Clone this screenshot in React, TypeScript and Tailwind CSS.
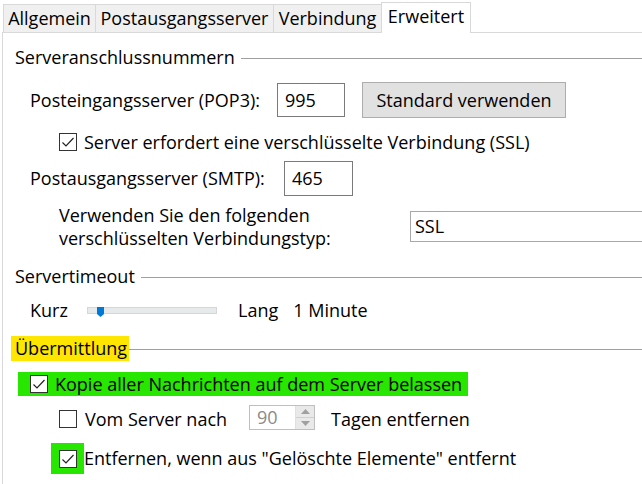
import React from 'react';

const font = { fontFamily: '"Open Sans", "Noto Sans", sans-serif' };

function Check({ checked }: { checked: boolean }) {
  return (
    <span className="flex h-[18px] w-[18px] shrink-0 items-center justify-center border border-[#333333] bg-white">
      {checked && (
        <svg width="14" height="14" viewBox="0 0 14 14">
          <polyline points="1.5,7.5 5,11 12.5,3" fill="none" stroke="#222222" strokeWidth="1.2" />
        </svg>
      )}
    </span>
  );
}

function GroupHeader({ title, highlight }: { title: string; highlight?: boolean }) {
  return (
    <div className="flex h-[25px] items-center">
      <span className={highlight ? 'flex h-[25px] items-center bg-[#ffe600] pl-[4px] pr-[2px]' : 'pl-[12px] pr-[6px]'}>
        {title}
      </span>
      <div className="mt-[2px] h-px flex-1 bg-[#a0a0a0]" />
    </div>
  );
}

const tabs = [
  { label: 'Allgemein', w: 'w-[92px]' },
  { label: 'Postausgangsserver', w: 'w-[178px]' },
  { label: 'Verbindung', w: 'w-[108px]' },
];

export default function App() {
  return (
    <div className="h-[484px] w-[642px] overflow-hidden bg-white text-[18px] text-black" style={font}>
      {/* tab strip */}
      <div className="flex h-[32px] items-end pl-[3px]">
        {tabs.map(t => (
          <div
            key={t.label}
            className={`${t.w} flex h-[28px] items-center justify-center whitespace-nowrap border-l border-t border-[#d9d9d9] bg-[#f0f0f0]`}
          >
            {t.label}
          </div>
        ))}
        <div className="relative z-10 -mb-px flex h-[31px] w-[90px] items-center justify-center border-x border-t border-[#d9d9d9] bg-white pb-[4px]">
          Erweitert
        </div>
      </div>

      {/* panel */}
      <div className="ml-[2px] flex h-[452px] flex-col border-l border-t border-[#d9d9d9]">
        <div className="mt-[12px]">
          <GroupHeader title="Serveranschlussnummern" />
        </div>

        <div className="mt-[12px] flex h-[36px] items-center">
          <span className="w-[274px] shrink-0 pl-[27px]">Posteingangsserver (POP3):</span>
          <div className="flex h-[34px] w-[68px] items-center border border-[#7a7a7a] pl-[7px]">995</div>
          <button className="ml-[17px] flex h-[36px] w-[204px] items-center justify-center border border-[#adadad] bg-[#e1e1e1]">
            Standard verwenden
          </button>
        </div>

        <div className="mt-[12px] flex h-[24px] items-center pl-[56px]">
          <Check checked />
          <span className="ml-[7px]">Server erfordert eine verschlüsselte Verbindung (SSL)</span>
        </div>

        <div className="mt-[7px] flex h-[35px] items-center">
          <span className="w-[281px] shrink-0 pl-[27px]">Postausgangsserver (SMTP):</span>
          <div className="flex h-[35px] w-[69px] items-center border border-[#7a7a7a] pl-[7px]">465</div>
        </div>

        <div className="mt-[7px] flex h-[47px] items-center">
          <div className="w-[407px] shrink-0 pl-[56px] leading-[23px]">
            Verwenden Sie den folgenden
            <br />
            verschlüsselten Verbindungstyp:
          </div>
          <div className="-mr-[4px] flex h-[31px] flex-1 items-center border border-[#a8a8a8] pl-[4px]">SSL</div>
        </div>

        <div className="mt-[14px]">
          <GroupHeader title="Servertimeout" />
        </div>

        <div className="mt-[9px] flex h-[24px] items-center">
          <span className="w-[84px] shrink-0 pl-[27px]">Kurz</span>
          <div className="relative h-[7px] w-[130px] border border-[#d6d6d6] bg-[#e7eaea]">
            <svg className="absolute left-[9px] top-[-1px]" width="7" height="10" viewBox="0 0 7 10">
              <polygon points="0,0 7,0 7,7 3.5,10 0,7" fill="#0078d7" />
            </svg>
          </div>
          <span className="ml-[21px]">Lang</span>
          <span className="ml-[15px]">1 Minute</span>
        </div>

        <div className="mt-[14px] pl-[8px]">
          <GroupHeader title="Übermittlung" highlight />
        </div>

        <div className="mt-[11px] flex">
          <div className="ml-[15px] flex h-[24px] w-[450px] items-center bg-[#27e600] pl-[12px]">
            <Check checked />
            <span className="ml-[7px] whitespace-nowrap">Kopie aller Nachrichten auf dem Server belassen</span>
          </div>
        </div>

        <div className="mt-[9px] flex h-[28px] items-center">
          <div className="flex w-[246px] shrink-0 items-center pl-[56px]">
            <Check checked={false} />
            <span className="ml-[8px]">Vom Server nach</span>
          </div>
          <div className="-mt-[4px] flex h-[25px] w-[66px] items-stretch border border-[#bfbfbf]">
            <span className="flex flex-1 items-center pl-[7px] text-[#8a8a8a]">90</span>
            <div className="flex w-[19px] flex-col border-l border-[#e0e0e0]">
              <div className="flex flex-1 items-center justify-center bg-[#e9e9e9]">
                <svg width="9" height="5" viewBox="0 0 9 5">
                  <polygon points="0,5 4.5,0 9,5" fill="#a0a0a0" />
                </svg>
              </div>
              <div className="flex flex-1 items-center justify-center border-t border-[#d0d0d0] bg-[#e9e9e9]">
                <svg width="9" height="5" viewBox="0 0 9 5">
                  <polygon points="0,0 9,0 4.5,5" fill="#a0a0a0" />
                </svg>
              </div>
            </div>
          </div>
          <span className="ml-[16px]">Tagen entfernen</span>
        </div>

        <div className="mt-[10px] flex h-[31px] items-center pl-[48px]">
          <div className="flex h-[31px] w-[33px] items-center justify-center bg-[#27e600]">
            <Check checked />
          </div>
          <span className="whitespace-nowrap">Entfernen, wenn aus "Gelöschte Elemente" entfernt</span>
        </div>
      </div>
    </div>
  );
}
